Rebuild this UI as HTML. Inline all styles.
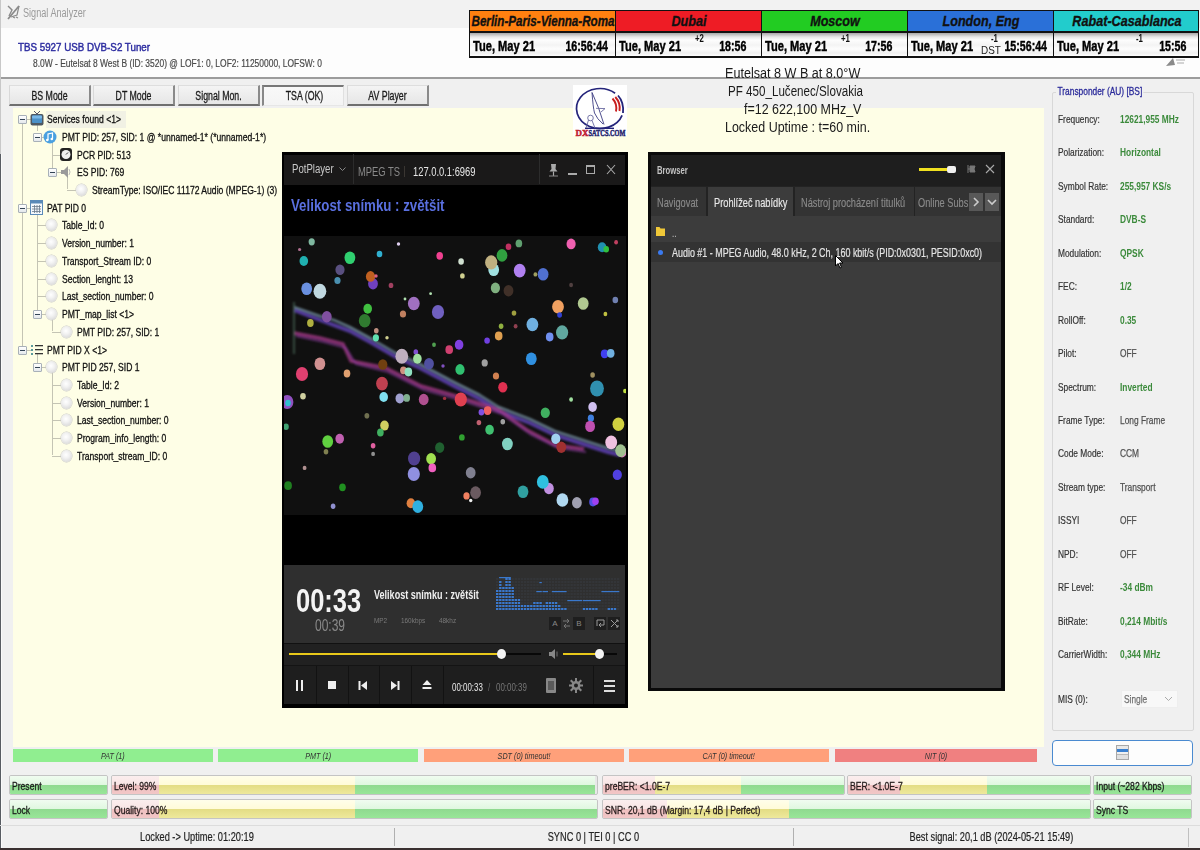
<!DOCTYPE html>
<html><head><meta charset="utf-8">
<style>
*{margin:0;padding:0;box-sizing:border-box}
html,body{width:1200px;height:850px;overflow:hidden}
body{background:#f0f0f0;font-family:"Liberation Sans",sans-serif;position:relative;color:#222}
.a{position:absolute}
.t{position:absolute;white-space:nowrap;transform-origin:0 50%;transform:scaleX(.78);font-size:11px;line-height:14px}
.c{transform-origin:50% 50%}
/* tabs */
.tab{position:absolute;top:85px;height:21px;background:linear-gradient(#f4f4f4,#e6e6e6);border-right:2px solid #8a8a8a;border-bottom:2px solid #6f6f6f;border-left:1px solid #d8d8d8;border-top:1px solid #dedede}
.tab span{position:absolute;left:0;right:0;top:3px;text-align:center;font-size:12px;transform:scaleX(.73);white-space:nowrap;color:#1a1a1a;-webkit-text-stroke:.3px #1a1a1a}
/* tree */
.tr{position:absolute;font-size:11px;line-height:14px;white-space:nowrap;transform-origin:0 50%;transform:scaleX(.78);color:#111;-webkit-text-stroke:.3px #111}
.bul{position:absolute;width:11px;height:12px;border-radius:50%;background:radial-gradient(circle at 45% 40%,#ffffff 0,#f2f2f2 35%,#cfcfcf 100%);box-shadow:0 0 0 .5px #c8c8c8}
.exp{position:absolute;width:9px;height:9px;border:1px solid #a8b0b8;background:linear-gradient(#fff,#e4e8ec);border-radius:1px}
.exp:after{content:"";position:absolute;left:1px;top:3px;width:5px;height:1px;background:#345}
.vl{position:absolute;width:1px;background:#c4c4b4}
.hl{position:absolute;height:1px;background:#c4c4b4}
/* right panel */
.lb{position:absolute;left:1058px;font-size:11px;line-height:14px;white-space:nowrap;transform-origin:0 50%;transform:scaleX(.76);color:#333;-webkit-text-stroke:.2px #333}
.vv{position:absolute;left:1120px;font-size:11px;line-height:14px;white-space:nowrap;transform-origin:0 50%;transform:scaleX(.76);color:#3b8a3b;font-weight:bold}
.vg{color:#505050;font-weight:normal;-webkit-text-stroke:.25px #505050}
/* table bars */
.tb{position:absolute;top:749px;height:12.5px;font-size:9px;line-height:15px;text-align:center;font-style:italic;color:#333}
.tb span{display:inline-block;transform:scaleX(.8)}
/* progress */
.pb{position:absolute;height:20px;border:1px solid #c4c4c4;border-radius:2px;overflow:hidden;background:#e8e8e8}
.seg{position:absolute;top:0;bottom:0}
.g{background:linear-gradient(#f0fcf0 0,#dff7df 50%,#8fd98f 50%,#98e698 100%)}
.r{background:linear-gradient(#fbeeee 0,#f8e4e4 50%,#efc0c0 50%,#f2c6c6 100%)}
.y{background:linear-gradient(#fffeea 0,#fffbd8 50%,#e3dc84 50%,#eee99c 100%)}
.pt{position:absolute;left:2px;top:3px;font-size:11px;line-height:14px;white-space:nowrap;transform-origin:0 50%;transform:scaleX(.78);color:#1a1a1a;-webkit-text-stroke:.3px #1a1a1a}
.sb{position:absolute;top:830px;font-size:12px;line-height:14px;white-space:nowrap;color:#222;text-align:center}
.sb span{display:inline-block;transform:scaleX(.77);-webkit-text-stroke:.2px #222}
</style></head><body>

<!-- title bar -->
<div class="a" style="left:0;top:0;width:1200px;height:28px;background:#f2f2f2"></div>
<div class="a" style="left:0;top:28px;width:1200px;height:49px;background:#fdfdfd"></div>
<div class="a" style="left:0;top:77px;width:1200px;height:2px;background:#9c9c9c"></div>
<div class="a" style="left:0;top:0;width:1px;height:154px;background:#c8c8c8"></div><div class="a" style="left:0;top:154px;width:1px;height:696px;background:#585c62"></div><div class="a" style="left:1px;top:154px;width:1px;height:694px;background:#fafafa"></div>

<div class="t" style="left:23px;top:6px;font-size:12px;color:#9a9a9a;transform:scaleX(.76)">Signal Analyzer</div>
<svg class="a" style="left:7px;top:4px" width="13" height="16" viewBox="0 0 13 16"><g stroke="#8a8a8a" fill="none"><path d="M1 2 L5 6 Q3 10 2 12" stroke-width="1.4"/><path d="M1 15 L12 2" stroke-width="1.8"/><path d="M12 2 L10 11 L4 13" stroke-width="1.2"/><path d="M6 13 L8 14 M9 13 L11 14" stroke-width="1.2"/></g></svg>

<div class="t" style="left:18px;top:39.5px;font-size:11.5px;color:#2c2ca0;transform:scaleX(.85);-webkit-text-stroke:.45px #2c2ca0">TBS 5927 USB DVB-S2 Tuner</div>
<div class="t" style="left:33px;top:56px;color:#484848;transform:scaleX(.767);-webkit-text-stroke:.2px #484848">8.0W - Eutelsat 8 West B (ID: 3520) @ LOF1: 0, LOF2: 11250000, LOFSW: 0</div>

<div class="a" style="left:469px;top:10px;width:730px;height:48px;background:#111"></div>
<div class="a" style="left:470px;top:11px;width:145px;height:20px;background:#ff8010"></div>
<div class="a" style="left:470px;top:33px;width:145px;height:23px;background:linear-gradient(#a8a8a8 0,#e8e8e8 4px,#fdfdfd 7px,#f4f4f4 12px,#fdfdfd 16px,#f0f0f0 20px,#fdfdfd 23px)"></div>
<div class="a" style="left:542.5px;top:12px;height:18px;font:italic bold 15px/18px 'Liberation Sans',sans-serif;color:#111;-webkit-text-stroke:.35px #111;white-space:nowrap;transform:translateX(-50%) scaleX(0.775)">Berlin-Paris-Vienna-Roma</div>
<div class="t" style="left:473px;top:37px;font:bold 15px/17px 'Liberation Sans',sans-serif;color:#000;-webkit-text-stroke:.45px #000;transform:scaleX(.74)">Tue, May 21</div>
<div class="a" style="left:469px;top:37px;width:139px;text-align:right;font:bold 15px/17px 'Liberation Sans',sans-serif;color:#000;-webkit-text-stroke:.45px #000;white-space:nowrap"><span style="display:inline-block;transform:scaleX(.71);transform-origin:100% 50%">16:56:44</span></div>
<div class="a" style="left:616px;top:11px;width:145px;height:20px;background:#ee1c25"></div>
<div class="a" style="left:616px;top:33px;width:145px;height:23px;background:linear-gradient(#a8a8a8 0,#e8e8e8 4px,#fdfdfd 7px,#f4f4f4 12px,#fdfdfd 16px,#f0f0f0 20px,#fdfdfd 23px)"></div>
<div class="a" style="left:688.5px;top:12px;height:18px;font:italic bold 15px/18px 'Liberation Sans',sans-serif;color:#111;-webkit-text-stroke:.35px #111;white-space:nowrap;transform:translateX(-50%) scaleX(0.84)">Dubai</div>
<div class="t" style="left:619px;top:37px;font:bold 15px/17px 'Liberation Sans',sans-serif;color:#000;-webkit-text-stroke:.45px #000;transform:scaleX(.74)">Tue, May 21</div>
<div class="a" style="left:615px;top:37px;width:131px;text-align:right;font:bold 15px/17px 'Liberation Sans',sans-serif;color:#000;-webkit-text-stroke:.45px #000;white-space:nowrap"><span style="display:inline-block;transform:scaleX(.71);transform-origin:100% 50%">18:56</span></div>
<div class="t" style="left:695px;top:33px;font:bold 10px/12px 'Liberation Sans',sans-serif;color:#111">+2</div>
<div class="a" style="left:762px;top:11px;width:145px;height:20px;background:#22cc22"></div>
<div class="a" style="left:762px;top:33px;width:145px;height:23px;background:linear-gradient(#a8a8a8 0,#e8e8e8 4px,#fdfdfd 7px,#f4f4f4 12px,#fdfdfd 16px,#f0f0f0 20px,#fdfdfd 23px)"></div>
<div class="a" style="left:834.5px;top:12px;height:18px;font:italic bold 15px/18px 'Liberation Sans',sans-serif;color:#111;-webkit-text-stroke:.35px #111;white-space:nowrap;transform:translateX(-50%) scaleX(0.84)">Moscow</div>
<div class="t" style="left:765px;top:37px;font:bold 15px/17px 'Liberation Sans',sans-serif;color:#000;-webkit-text-stroke:.45px #000;transform:scaleX(.74)">Tue, May 21</div>
<div class="a" style="left:761px;top:37px;width:131px;text-align:right;font:bold 15px/17px 'Liberation Sans',sans-serif;color:#000;-webkit-text-stroke:.45px #000;white-space:nowrap"><span style="display:inline-block;transform:scaleX(.71);transform-origin:100% 50%">17:56</span></div>
<div class="t" style="left:841px;top:33px;font:bold 10px/12px 'Liberation Sans',sans-serif;color:#111">+1</div>
<div class="a" style="left:908px;top:11px;width:145px;height:20px;background:#2a70d8"></div>
<div class="a" style="left:908px;top:33px;width:145px;height:23px;background:linear-gradient(#a8a8a8 0,#e8e8e8 4px,#fdfdfd 7px,#f4f4f4 12px,#fdfdfd 16px,#f0f0f0 20px,#fdfdfd 23px)"></div>
<div class="a" style="left:980.5px;top:12px;height:18px;font:italic bold 15px/18px 'Liberation Sans',sans-serif;color:#111;-webkit-text-stroke:.35px #111;white-space:nowrap;transform:translateX(-50%) scaleX(0.84)">London, Eng</div>
<div class="t" style="left:911px;top:37px;font:bold 15px/17px 'Liberation Sans',sans-serif;color:#000;-webkit-text-stroke:.45px #000;transform:scaleX(.74)">Tue, May 21</div>
<div class="a" style="left:907px;top:37px;width:140px;text-align:right;font:bold 15px/17px 'Liberation Sans',sans-serif;color:#000;-webkit-text-stroke:.45px #000;white-space:nowrap"><span style="display:inline-block;transform:scaleX(.71);transform-origin:100% 50%">15:56:44</span></div>
<div class="t" style="left:991px;top:33px;font:bold 10px/12px 'Liberation Sans',sans-serif;color:#111">-1</div>
<div class="t" style="left:981px;top:44px;font:11px/12px 'Liberation Sans',sans-serif;color:#222;transform:scaleX(.9)">DST</div>
<div class="a" style="left:1054px;top:11px;width:144px;height:20px;background:#22cccc"></div>
<div class="a" style="left:1054px;top:33px;width:144px;height:23px;background:linear-gradient(#a8a8a8 0,#e8e8e8 4px,#fdfdfd 7px,#f4f4f4 12px,#fdfdfd 16px,#f0f0f0 20px,#fdfdfd 23px)"></div>
<div class="a" style="left:1126.5px;top:12px;height:18px;font:italic bold 15px/18px 'Liberation Sans',sans-serif;color:#111;-webkit-text-stroke:.35px #111;white-space:nowrap;transform:translateX(-50%) scaleX(0.84)">Rabat-Casablanca</div>
<div class="t" style="left:1057px;top:37px;font:bold 15px/17px 'Liberation Sans',sans-serif;color:#000;-webkit-text-stroke:.45px #000;transform:scaleX(.74)">Tue, May 21</div>
<div class="a" style="left:1053px;top:37px;width:133px;text-align:right;font:bold 15px/17px 'Liberation Sans',sans-serif;color:#000;-webkit-text-stroke:.45px #000;white-space:nowrap"><span style="display:inline-block;transform:scaleX(.71);transform-origin:100% 50%">15:56</span></div>
<div class="t" style="left:1136px;top:33px;font:bold 10px/12px 'Liberation Sans',sans-serif;color:#111">-1</div>
<!-- tabs -->
<div class="tab" style="left:9px;width:82px"><span>BS Mode</span></div>
<div class="tab" style="left:93px;width:82px"><span>DT Mode</span></div>
<div class="tab" style="left:178px;width:82px"><span>Signal Mon.</span></div>
<div class="tab" style="left:262px;width:82px;background:linear-gradient(#f8f8f8,#f4f4f4);border-top:2px solid #777;border-left:2px solid #888;border-right:1px solid #e0e0e0;border-bottom:1px solid #e6e6e6"><span style="left:2px;top:2px">TSA (OK)</span></div>
<div class="tab" style="left:347px;width:82px"><span>AV Player</span></div>

<!-- main yellow panel -->
<div class="a" style="left:13px;top:108px;width:1031px;height:638.5px;background:#fefee6"></div>

<div class="vl" style="left:22px;top:124px;height:225px"></div>
<div class="vl" style="left:37px;top:125px;height:6px"></div>
<div class="vl" style="left:52px;top:141px;height:30px"></div>
<div class="vl" style="left:67px;top:176px;height:13px"></div>
<div class="vl" style="left:37px;top:212px;height:101px"></div>
<div class="vl" style="left:52px;top:318px;height:13px"></div>
<div class="vl" style="left:37px;top:354px;height:13px"></div>
<div class="vl" style="left:52px;top:372px;height:83px"></div>
<div class="a" style="left:46px;top:111px;width:80px;height:17px;background:#f1f1e4"></div>
<div class="hl" style="left:22px;top:119.0px;width:9px"></div>
<div class="exp" style="left:18px;top:115.0px"></div>
<svg class="a" style="left:30px;top:110.0px" width="14" height="16" viewBox="0 0 14 16"><path d="M4 1 L7 4 L10 1" stroke="#556" stroke-width="1" fill="none"/><rect x="0.5" y="4" width="13" height="11.5" rx="2" fill="#4e5862"/><rect x="2" y="5.5" width="10" height="7.5" rx="1" fill="#4a90c8"/><rect x="2" y="5.5" width="10" height="3" rx="1" fill="#78b8e8"/></svg>
<div class="tr" style="left:47px;top:112.0px">Services found &lt;1&gt;</div>
<div class="hl" style="left:37px;top:136.7px;width:9px"></div>
<div class="exp" style="left:33px;top:132.7px"></div>
<svg class="a" style="left:43px;top:129.7px" width="14" height="14" viewBox="0 0 14 14"><circle cx="7" cy="7" r="6.5" fill="#4aa0e0"/><path d="M5 10 V4 L9.5 3 V9" stroke="#fff" stroke-width="1.2" fill="none"/><circle cx="4.3" cy="10" r="1.3" fill="#fff"/><circle cx="8.8" cy="9" r="1.3" fill="#fff"/></svg>
<div class="tr" style="left:62px;top:129.7px">PMT PID: 257, SID: 1 @ *unnamed-1* (*unnamed-1*)</div>
<div class="hl" style="left:52px;top:154.5px;width:9px"></div>
<svg class="a" style="left:60px;top:147.5px" width="12" height="13" viewBox="0 0 12 13"><rect x="0" y="0" width="12" height="13" rx="3" fill="#222"/><circle cx="6" cy="6.5" r="4.5" fill="#eee"/><path d="M6 6.5 L8 4.5" stroke="#333" stroke-width="1"/></svg>
<div class="tr" style="left:77px;top:147.5px">PCR PID: 513</div>
<div class="hl" style="left:52px;top:172.2px;width:9px"></div>
<div class="exp" style="left:48px;top:168.2px"></div>
<svg class="a" style="left:60px;top:165.2px" width="12" height="14" viewBox="0 0 12 14"><path d="M1 5 H4 L8 1 V13 L4 9 H1 Z" fill="#9a9a9a"/><path d="M9 4 Q11 7 9 10" stroke="#bbb" fill="none"/></svg>
<div class="tr" style="left:77px;top:165.2px">ES PID: 769</div>
<div class="hl" style="left:67px;top:189.9px;width:9px"></div>
<div class="bul" style="left:76px;top:183.9px"></div>
<div class="tr" style="left:92px;top:182.9px">StreamType: ISO/IEC 11172 Audio (MPEG-1) (3)</div>
<div class="hl" style="left:22px;top:207.7px;width:9px"></div>
<div class="exp" style="left:18px;top:203.7px"></div>
<svg class="a" style="left:30px;top:199.7px" width="13" height="15" viewBox="0 0 13 15"><rect x="0.5" y="0.5" width="12" height="14" fill="#f4f8fc" stroke="#5a8ab8"/><rect x="0.5" y="0.5" width="12" height="3" fill="#5a8ab8"/><g stroke="#6a7a8a" stroke-width=".8"><path d="M2 6.5H11M2 9H11M2 11.5H11M4.5 5V13M7 5V13M9.5 5V13"/></g></svg>
<div class="tr" style="left:47px;top:200.7px">PAT PID 0</div>
<div class="hl" style="left:37px;top:225.4px;width:9px"></div>
<div class="bul" style="left:46px;top:219.4px"></div>
<div class="tr" style="left:62px;top:218.4px">Table_Id: 0</div>
<div class="hl" style="left:37px;top:243.1px;width:9px"></div>
<div class="bul" style="left:46px;top:237.1px"></div>
<div class="tr" style="left:62px;top:236.1px">Version_number: 1</div>
<div class="hl" style="left:37px;top:260.8px;width:9px"></div>
<div class="bul" style="left:46px;top:254.8px"></div>
<div class="tr" style="left:62px;top:253.8px">Transport_Stream ID: 0</div>
<div class="hl" style="left:37px;top:278.6px;width:9px"></div>
<div class="bul" style="left:46px;top:272.6px"></div>
<div class="tr" style="left:62px;top:271.6px">Section_lenght: 13</div>
<div class="hl" style="left:37px;top:296.3px;width:9px"></div>
<div class="bul" style="left:46px;top:290.3px"></div>
<div class="tr" style="left:62px;top:289.3px">Last_section_number: 0</div>
<div class="hl" style="left:37px;top:314.0px;width:9px"></div>
<div class="exp" style="left:33px;top:310.0px"></div>
<div class="bul" style="left:46px;top:308.0px"></div>
<div class="tr" style="left:62px;top:307.0px">PMT_map_list &lt;1&gt;</div>
<div class="hl" style="left:52px;top:331.8px;width:9px"></div>
<div class="bul" style="left:61px;top:325.8px"></div>
<div class="tr" style="left:77px;top:324.8px">PMT PID: 257, SID: 1</div>
<div class="hl" style="left:22px;top:349.5px;width:9px"></div>
<div class="exp" style="left:18px;top:345.5px"></div>
<svg class="a" style="left:31px;top:342.5px" width="12" height="14" viewBox="0 0 12 14"><g fill="#5a9a9a"><rect x="0" y="2" width="2" height="2"/><rect x="0" y="6" width="2" height="2"/><rect x="0" y="10" width="2" height="2"/></g><g fill="#333"><rect x="4" y="2" width="8" height="1.3"/><rect x="4" y="6" width="8" height="1.3"/><rect x="4" y="10" width="8" height="1.3"/></g></svg>
<div class="tr" style="left:47px;top:342.5px">PMT PID X &lt;1&gt;</div>
<div class="hl" style="left:37px;top:367.2px;width:9px"></div>
<div class="exp" style="left:33px;top:363.2px"></div>
<div class="bul" style="left:46px;top:361.2px"></div>
<div class="tr" style="left:62px;top:360.2px">PMT PID 257, SID 1</div>
<div class="hl" style="left:52px;top:384.9px;width:9px"></div>
<div class="bul" style="left:61px;top:378.9px"></div>
<div class="tr" style="left:77px;top:377.9px">Table_Id: 2</div>
<div class="hl" style="left:52px;top:402.7px;width:9px"></div>
<div class="bul" style="left:61px;top:396.7px"></div>
<div class="tr" style="left:77px;top:395.7px">Version_number: 1</div>
<div class="hl" style="left:52px;top:420.4px;width:9px"></div>
<div class="bul" style="left:61px;top:414.4px"></div>
<div class="tr" style="left:77px;top:413.4px">Last_section_number: 0</div>
<div class="hl" style="left:52px;top:438.1px;width:9px"></div>
<div class="bul" style="left:61px;top:432.1px"></div>
<div class="tr" style="left:77px;top:431.1px">Program_info_length: 0</div>
<div class="hl" style="left:52px;top:455.9px;width:9px"></div>
<div class="bul" style="left:61px;top:449.9px"></div>
<div class="tr" style="left:77px;top:448.9px">Transport_stream_ID: 0</div>
<div class="a" style="left:573px;top:85px;width:54px;height:51px;background:#fff"></div>
<svg class="a" style="left:573px;top:85px" width="54" height="52" viewBox="0 0 54 52">
<path d="M49.1 30.3 A23.5 20 0 1 1 42.1 8.2" stroke="#24247a" stroke-width="1.7" fill="none"/>
<path d="M45 10.5 Q51 17 50 28" stroke="#24247a" stroke-width="1.8" fill="none"/>
<path d="M39.5 13.5 Q44.5 19 43 26.5" stroke="#c82020" stroke-width="1.9" fill="none"/>
<path d="M42.3 12 Q47.8 18 46.5 26" stroke="#c82020" stroke-width="1.9" fill="none"/>
<path d="M12 43.3 H41" stroke="#24247a" stroke-width="1.4"/>
<path d="M19 7.5 Q26 22 31 39.5 M19 7.5 Q20 22 21.5 28 Q24 34 30 39" stroke="#3a3a80" stroke-width=".9" fill="none"/>
<path d="M23 23.3 L32 23.6 L28 27" stroke="#6a6aa0" stroke-width=".9" fill="none"/>
<circle cx="17.5" cy="33" r="2.8" stroke="#6a6aa0" stroke-width=".9" fill="none"/>
<path d="M15.5 35 L13 43 M19 35.5 L22 43" stroke="#6a6aa0" stroke-width=".9" fill="none"/>
<text x="2.5" y="50.5" font-family="Liberation Serif" font-weight="bold" font-size="8.5" fill="#c02030" stroke="#c02030" stroke-width=".45" textLength="13" lengthAdjust="spacingAndGlyphs">DX</text>
<text x="15.5" y="50.5" font-family="Liberation Serif" font-weight="bold" font-size="8.5" fill="#22226a" stroke="#22226a" stroke-width=".45" textLength="37" lengthAdjust="spacingAndGlyphs">SATCS.COM</text>
</svg>
<div class="t" style="left:725px;top:65px;font-size:14px;line-height:16px;color:#1a1a1a;transform:scaleX(0.9)">Eutelsat 8 W B at 8.0°W</div>
<div class="t" style="left:728px;top:83px;font-size:14px;line-height:16px;color:#1a1a1a;transform:scaleX(0.83)">PF 450_Lučenec/Slovakia</div>
<div class="t" style="left:744px;top:101px;font-size:14px;line-height:16px;color:#1a1a1a;transform:scaleX(0.89)">f=12 622,100 MHz_V</div>
<div class="t" style="left:725px;top:119px;font-size:14px;line-height:16px;color:#1a1a1a;transform:scaleX(0.89)">Locked Uptime : t=60 min.</div>
<div class="a" style="left:282px;top:152px;width:346px;height:556px;background:#000"></div>
<div class="a" style="left:284px;top:155px;width:341px;height:30px;background:#1a1919"></div>
<div class="a" style="left:353px;top:154px;width:1px;height:30px;background:#2c2c2c"></div>
<div class="a" style="left:539px;top:154px;width:1px;height:30px;background:#2c2c2c"></div>
<div class="t" style="left:292px;top:162.2px;font:normal 12px/15.6px 'Liberation Sans',sans-serif;color:#c8c8c8;transform:scaleX(0.8);">PotPlayer</div>
<svg class="a" style="left:339px;top:167px" width="7" height="5" viewBox="0 0 7 5"><path d="M.5 .5 L3.5 3.5 L6.5 .5" stroke="#888" fill="none"/></svg>
<div class="t" style="left:358px;top:164.7px;font:normal 12px/15.6px 'Liberation Sans',sans-serif;color:#8a8a8a;transform:scaleX(0.78);">MPEG TS</div>
<div class="a" style="left:404px;top:166px;width:1px;height:11px;background:#3a3632"></div>
<div class="t" style="left:413px;top:164.7px;font:normal 12px/15.6px 'Liberation Sans',sans-serif;color:#e6e6e6;transform:scaleX(0.78);">127.0.0.1:6969</div>
<svg class="a" style="left:548px;top:163px" width="11" height="14" viewBox="0 0 11 14"><path d="M3 1 H8 L7.5 6 L9.5 8.5 H1.5 L3.5 6 Z" fill="#aaa"/><path d="M5.5 8.5 V13" stroke="#aaa" stroke-width="1.2"/><path d="M1 13 H10" stroke="#888"/></svg>
<div class="a" style="left:568px;top:173px;width:9px;height:2px;background:#aaa"></div>
<div class="a" style="left:586px;top:165px;width:9px;height:9px;border:1px solid #aaa;border-top-width:2px"></div>
<svg class="a" style="left:606px;top:164px" width="10" height="11" viewBox="0 0 10 11"><path d="M1 1 L9 10 M9 1 L1 10" stroke="#aaa" stroke-width="1.1"/></svg>
<div class="t" style="left:291px;top:195.6px;font:bold 16px/20.8px 'Liberation Sans',sans-serif;color:#5a70e0;transform:scaleX(0.83);">Velikost snímku : zvětšit</div>
<svg class="a" style="left:284px;top:236px" width="342" height="279" viewBox="0 0 342 279"><rect width="342" height="279" fill="#101010"/><defs><filter id="bl" x="-20%" y="-20%" width="140%" height="140%"><feGaussianBlur stdDeviation="0.8"/></filter></defs><g filter="url(#bl)" fill="none" stroke-linejoin="round"><path d="M10 74 L36 84 L66 95 L88 107 L112 121 L136 132 L172 151 L196 163 L215 175 L246 187 L271 199 L296 207 L324 216 L336 219" stroke="#6a48c8" stroke-width="4" opacity=".75"/><path d="M10 71 L36 80 L50 84 L66 91 L88 103 L112 117 L136 128 L172 147 L196 159 L215 171 L246 183 L271 195 L296 203 L324 212 L336 215" stroke="#7a98a8" stroke-width="2" opacity=".85"/><path d="M10 97 L36 102 L59 108 L67 125 L102 132 L137 150 L172 160 L215 174 L243 194 L271 209 L300 213" stroke="#a03a86" stroke-width="3.5" opacity=".8"/><path d="M12 100 L40 106 L62 112 L72 128 L104 136 L140 154 L176 164 L218 178 L246 198 L274 212 L302 216" stroke="#8a3aa0" stroke-width="2" opacity=".6"/><path d="M10 66 L10 118" stroke="#507060" stroke-width="2" opacity=".6"/></g><ellipse cx="27.7" cy="5.8" rx="3.1" ry="3.6" fill="#7fb8a0"/><ellipse cx="15.6" cy="13.5" rx="1.6" ry="1.6" fill="#b07090"/><ellipse cx="19.8" cy="25.0" rx="4.3" ry="5.0" fill="#20b0b0"/><ellipse cx="65.9" cy="21.7" rx="5.4" ry="6.3" fill="#30d070"/><ellipse cx="95.5" cy="18.0" rx="2.8" ry="3.2" fill="#30b0d0"/><ellipse cx="114.5" cy="8.0" rx="1.7" ry="1.7" fill="#e0d0f0"/><ellipse cx="155.7" cy="19.8" rx="3.3" ry="3.9" fill="#f04090"/><ellipse cx="56.0" cy="33.8" rx="4.6" ry="5.3" fill="#5a5080"/><ellipse cx="53.5" cy="44.5" rx="3.1" ry="3.6" fill="#4a90b0"/><ellipse cx="89.0" cy="47.8" rx="4.9" ry="5.7" fill="#7040c0"/><ellipse cx="86.5" cy="40.4" rx="4.6" ry="5.3" fill="#c06020"/><ellipse cx="92.0" cy="40.0" rx="1.7" ry="1.7" fill="#e06080"/><ellipse cx="107.0" cy="49.4" rx="2.3" ry="2.7" fill="#a04060"/><ellipse cx="22.7" cy="52.7" rx="5.4" ry="6.3" fill="#6a90e0"/><ellipse cx="35.9" cy="55.2" rx="6.4" ry="7.5" fill="#c0d8e0"/><ellipse cx="146.6" cy="57.7" rx="1.4" ry="1.4" fill="#b0e0b0"/><ellipse cx="121.0" cy="63.0" rx="1.4" ry="1.4" fill="#b0e0b0"/><ellipse cx="129.8" cy="67.5" rx="5.9" ry="6.8" fill="#a070c0"/><ellipse cx="154.0" cy="76.0" rx="6.1" ry="7.1" fill="#7060c0"/><ellipse cx="119.0" cy="78.0" rx="3.1" ry="3.6" fill="#c08060"/><ellipse cx="83.7" cy="72.8" rx="4.3" ry="5.0" fill="#40c040"/><ellipse cx="80.7" cy="84.8" rx="5.9" ry="6.8" fill="#307a30"/><ellipse cx="42.8" cy="80.7" rx="4.9" ry="5.7" fill="#8050a0"/><ellipse cx="26.4" cy="87.0" rx="3.3" ry="3.9" fill="#b0b040"/><ellipse cx="92.3" cy="94.7" rx="2.3" ry="2.7" fill="#c09080"/><ellipse cx="91.9" cy="101.8" rx="3.1" ry="3.6" fill="#60e0b0"/><ellipse cx="103.0" cy="101.8" rx="1.7" ry="1.7" fill="#d0d090"/><ellipse cx="150.0" cy="108.7" rx="1.9" ry="2.2" fill="#50a050"/><ellipse cx="165.2" cy="113.7" rx="3.8" ry="4.4" fill="#d04070"/><ellipse cx="131.8" cy="116.0" rx="2.3" ry="2.7" fill="#8050d0"/><ellipse cx="98.8" cy="128.5" rx="4.6" ry="5.3" fill="#704010"/><ellipse cx="117.8" cy="120.3" rx="6.4" ry="7.5" fill="#c0b0c0"/><ellipse cx="133.4" cy="122.7" rx="4.3" ry="5.0" fill="#a0e0a0"/><ellipse cx="145.0" cy="127.7" rx="4.9" ry="5.7" fill="#5050a0"/><ellipse cx="35.9" cy="127.7" rx="5.4" ry="6.3" fill="#d09090"/><ellipse cx="18.0" cy="138.0" rx="6.1" ry="7.1" fill="#e04070"/><ellipse cx="63.0" cy="137.5" rx="3.3" ry="3.9" fill="#e0a070"/><ellipse cx="119.4" cy="134.3" rx="3.3" ry="3.9" fill="#d09080"/><ellipse cx="124.4" cy="136.0" rx="3.8" ry="4.4" fill="#90e0c0"/><ellipse cx="159.0" cy="130.0" rx="1.7" ry="1.7" fill="#8050c0"/><ellipse cx="287.1" cy="7.9" rx="4.6" ry="5.3" fill="#f060b0"/><ellipse cx="234.9" cy="7.4" rx="3.3" ry="3.9" fill="#60a070"/><ellipse cx="224.5" cy="10.7" rx="2.8" ry="3.2" fill="#c03060"/><ellipse cx="218.0" cy="19.4" rx="5.4" ry="6.3" fill="#30a040"/><ellipse cx="209.7" cy="33.8" rx="5.4" ry="6.3" fill="#a0e0e0"/><ellipse cx="207.2" cy="26.4" rx="6.1" ry="7.1" fill="#c0b080"/><ellipse cx="177.1" cy="25.5" rx="2.8" ry="3.2" fill="#d0e0d0"/><ellipse cx="178.4" cy="39.9" rx="2.3" ry="2.7" fill="#d0d090"/><ellipse cx="235.7" cy="34.6" rx="5.9" ry="6.8" fill="#b080f0"/><ellipse cx="259.1" cy="38.2" rx="5.4" ry="6.3" fill="#5070d0"/><ellipse cx="251.4" cy="38.4" rx="1.9" ry="2.2" fill="#a0a060"/><ellipse cx="211.4" cy="51.9" rx="4.6" ry="5.3" fill="#80b080"/><ellipse cx="224.5" cy="54.7" rx="4.9" ry="5.7" fill="#403028"/><ellipse cx="287.1" cy="49.0" rx="1.9" ry="2.2" fill="#504040"/><ellipse cx="318.1" cy="11.2" rx="4.3" ry="5.0" fill="#2090b0"/><ellipse cx="322.2" cy="13.2" rx="2.8" ry="3.2" fill="#30c040"/><ellipse cx="332.1" cy="6.3" rx="1.9" ry="2.2" fill="#c04060"/><ellipse cx="274.0" cy="70.8" rx="5.9" ry="6.8" fill="#f0a060"/><ellipse cx="275.6" cy="79.0" rx="2.4" ry="2.8" fill="#3040d0"/><ellipse cx="299.2" cy="67.5" rx="5.4" ry="6.3" fill="#b0c890"/><ellipse cx="331.3" cy="64.0" rx="2.8" ry="3.2" fill="#7080b0"/><ellipse cx="321.4" cy="78.0" rx="1.9" ry="2.2" fill="#c0c040"/><ellipse cx="230.0" cy="77.1" rx="2.3" ry="2.7" fill="#a0a040"/><ellipse cx="248.4" cy="88.5" rx="5.9" ry="6.8" fill="#70b0e0"/><ellipse cx="278.1" cy="96.4" rx="6.1" ry="7.1" fill="#60a8a0"/><ellipse cx="265.7" cy="101.0" rx="3.8" ry="4.4" fill="#7090f0"/><ellipse cx="217.1" cy="90.3" rx="2.3" ry="2.7" fill="#90b040"/><ellipse cx="231.6" cy="90.3" rx="1.9" ry="2.2" fill="#904050"/><ellipse cx="214.7" cy="100.0" rx="3.8" ry="4.4" fill="#e0a050"/><ellipse cx="203.1" cy="104.6" rx="2.8" ry="3.2" fill="#7040e0"/><ellipse cx="175.1" cy="108.7" rx="4.3" ry="5.0" fill="#8040e0"/><ellipse cx="247.3" cy="122.7" rx="5.4" ry="6.3" fill="#3090e0"/><ellipse cx="200.7" cy="126.9" rx="3.1" ry="3.6" fill="#a0a0a0"/><ellipse cx="176.0" cy="133.4" rx="4.6" ry="5.3" fill="#30c070"/><ellipse cx="212.0" cy="140.0" rx="3.1" ry="3.6" fill="#d08050"/><ellipse cx="320.6" cy="117.8" rx="3.8" ry="4.4" fill="#4040f0"/><ellipse cx="326.7" cy="117.3" rx="3.8" ry="4.4" fill="#70b0e0"/><ellipse cx="308.6" cy="139.0" rx="2.3" ry="2.7" fill="#a09060"/><ellipse cx="98.0" cy="147.6" rx="5.9" ry="6.8" fill="#c04050"/><ellipse cx="99.7" cy="161.0" rx="4.3" ry="5.0" fill="#80e0f0"/><ellipse cx="115.8" cy="162.4" rx="4.3" ry="5.0" fill="#a0a0d0"/><ellipse cx="122.7" cy="161.9" rx="3.3" ry="3.9" fill="#80b090"/><ellipse cx="139.7" cy="163.5" rx="4.9" ry="5.7" fill="#b05090"/><ellipse cx="3.3" cy="166.0" rx="6.1" ry="7.1" fill="#9050c0"/><ellipse cx="4.0" cy="167.0" rx="2.8" ry="3.2" fill="#30c0d0"/><ellipse cx="19.0" cy="160.2" rx="2.8" ry="3.2" fill="#d0d0a0"/><ellipse cx="160.6" cy="162.4" rx="1.7" ry="1.7" fill="#a03040"/><ellipse cx="82.9" cy="179.7" rx="2.4" ry="2.8" fill="#707050"/><ellipse cx="100.5" cy="189.6" rx="4.3" ry="5.0" fill="#d0d060"/><ellipse cx="96.4" cy="196.5" rx="3.3" ry="3.9" fill="#40b060"/><ellipse cx="43.7" cy="205.5" rx="5.4" ry="6.3" fill="#60d040"/><ellipse cx="55.7" cy="202.7" rx="4.3" ry="5.0" fill="#c060b0"/><ellipse cx="42.0" cy="215.8" rx="2.3" ry="2.7" fill="#808050"/><ellipse cx="89.1" cy="209.7" rx="2.3" ry="2.7" fill="#e060a0"/><ellipse cx="89.1" cy="217.9" rx="1.9" ry="2.2" fill="#909090"/><ellipse cx="130.1" cy="222.5" rx="6.1" ry="7.1" fill="#504090"/><ellipse cx="129.8" cy="238.0" rx="6.1" ry="7.1" fill="#9090e0"/><ellipse cx="147.1" cy="222.8" rx="4.9" ry="5.7" fill="#a0e050"/><ellipse cx="148.3" cy="231.9" rx="3.8" ry="4.4" fill="#f060c0"/><ellipse cx="155.7" cy="211.6" rx="4.6" ry="5.3" fill="#206030"/><ellipse cx="20.6" cy="231.9" rx="1.9" ry="2.2" fill="#b09090"/><ellipse cx="4.1" cy="249.7" rx="3.8" ry="4.4" fill="#208020"/><ellipse cx="58.5" cy="251.3" rx="3.3" ry="3.9" fill="#209020"/><ellipse cx="49.1" cy="270.3" rx="2.3" ry="2.7" fill="#9090d0"/><ellipse cx="126.9" cy="267.3" rx="4.3" ry="5.0" fill="#e08040"/><ellipse cx="133.8" cy="270.6" rx="5.4" ry="6.3" fill="#30b0e0"/><ellipse cx="2.0" cy="190.7" rx="2.8" ry="3.2" fill="#40a070"/><ellipse cx="218.8" cy="151.2" rx="4.6" ry="5.3" fill="#e03050"/><ellipse cx="176.8" cy="163.5" rx="6.1" ry="7.1" fill="#e04050"/><ellipse cx="203.6" cy="174.6" rx="3.8" ry="4.4" fill="#f06060"/><ellipse cx="197.4" cy="176.2" rx="2.8" ry="3.2" fill="#8050e0"/><ellipse cx="194.9" cy="186.6" rx="2.3" ry="2.7" fill="#c06070"/><ellipse cx="218.8" cy="185.8" rx="2.3" ry="2.7" fill="#a0a0a0"/><ellipse cx="205.6" cy="193.7" rx="4.3" ry="5.0" fill="#40c070"/><ellipse cx="177.9" cy="201.4" rx="2.8" ry="3.2" fill="#30a030"/><ellipse cx="261.3" cy="176.7" rx="4.6" ry="5.3" fill="#40b060"/><ellipse cx="287.1" cy="163.5" rx="1.9" ry="2.2" fill="#a0e0a0"/><ellipse cx="223.4" cy="208.0" rx="5.4" ry="6.3" fill="#80d0c0"/><ellipse cx="271.8" cy="202.7" rx="4.6" ry="5.3" fill="#a0d0f0"/><ellipse cx="277.3" cy="211.3" rx="4.9" ry="5.7" fill="#a03030"/><ellipse cx="313.0" cy="152.5" rx="6.9" ry="8.0" fill="#3090b0"/><ellipse cx="308.6" cy="171.0" rx="4.3" ry="5.0" fill="#d0c0f0"/><ellipse cx="306.9" cy="182.2" rx="3.1" ry="3.6" fill="#4080e0"/><ellipse cx="306.1" cy="190.4" rx="4.9" ry="5.7" fill="#c050b0"/><ellipse cx="334.4" cy="188.2" rx="5.9" ry="6.8" fill="#d0d040"/><ellipse cx="327.2" cy="206.4" rx="5.9" ry="6.8" fill="#f0c0e0"/><ellipse cx="338.0" cy="216.0" rx="4.6" ry="5.4" fill="#e080c0"/><ellipse cx="336.6" cy="214.6" rx="5.4" ry="6.3" fill="#a0c090"/><ellipse cx="186.7" cy="236.8" rx="4.9" ry="5.7" fill="#808090"/><ellipse cx="191.6" cy="256.6" rx="5.4" ry="6.3" fill="#6a5a60"/><ellipse cx="182.5" cy="259.9" rx="3.1" ry="3.6" fill="#f08060"/><ellipse cx="186.7" cy="264.5" rx="1.7" ry="1.7" fill="#f0f0f0"/><ellipse cx="239.0" cy="255.8" rx="5.4" ry="6.3" fill="#30a0a0"/><ellipse cx="264.9" cy="252.5" rx="4.9" ry="5.7" fill="#c090e0"/><ellipse cx="258.8" cy="245.9" rx="5.9" ry="6.8" fill="#30c0e0"/><ellipse cx="278.4" cy="264.0" rx="5.9" ry="6.8" fill="#b0d8f0"/><ellipse cx="292.9" cy="266.8" rx="4.9" ry="5.7" fill="#a0a0b0"/><ellipse cx="309.0" cy="266.0" rx="3.8" ry="4.4" fill="#5050e0"/><ellipse cx="311.5" cy="265.2" rx="3.3" ry="3.8" fill="#a040f0"/><ellipse cx="333.3" cy="238.8" rx="4.6" ry="5.3" fill="#5040e0"/><ellipse cx="341.0" cy="155.0" rx="1.9" ry="2.2" fill="#c0e040"/></svg>
<div class="a" style="left:284px;top:565px;width:341px;height:78px;background:#2f2f2f"></div>
<div class="t" style="left:296px;top:582px;font:bold 34px/36px 'Liberation Sans',sans-serif;color:#f4f4f4;transform:scaleX(.75)">00:33</div>
<div class="t" style="left:315px;top:617px;font:16px/18px 'Liberation Sans',sans-serif;color:#8a8a8a;transform:scaleX(.75)">00:39</div>
<div class="t" style="left:374px;top:588.2px;font:bold 12px/15.6px 'Liberation Sans',sans-serif;color:#f0f0f0;transform:scaleX(0.755);">Velikost snímku : zvětšit</div>
<div class="t" style="left:374px;top:615.8px;font:normal 8px/10.4px 'Liberation Sans',sans-serif;color:#7a7a7a;transform:scaleX(0.8);">MP2</div>
<div class="t" style="left:401px;top:615.8px;font:normal 8px/10.4px 'Liberation Sans',sans-serif;color:#7a7a7a;transform:scaleX(0.8);">160kbps</div>
<div class="t" style="left:439px;top:615.8px;font:normal 8px/10.4px 'Liberation Sans',sans-serif;color:#7a7a7a;transform:scaleX(0.8);">48khz</div>
<svg class="a" style="left:496px;top:577px" width="126" height="34" viewBox="0 0 126 34"><rect x="0.0" y="31" width="2.4" height="2" fill="#3a78cc"/><rect x="0.0" y="28" width="2.4" height="2" fill="#3a78cc"/><rect x="0.0" y="25" width="2.4" height="2" fill="#3a78cc"/><rect x="0.0" y="22" width="2.4" height="2" fill="#3a78cc"/><rect x="0.0" y="19" width="2.4" height="2" fill="#3a78cc"/><rect x="0.0" y="16" width="2.4" height="2" fill="#3a78cc"/><rect x="0.0" y="13" width="2.4" height="2" fill="#3a78cc"/><rect x="0.0" y="10" width="2.4" height="2" fill="#333538"/><rect x="0.0" y="7" width="2.4" height="2" fill="#333538"/><rect x="0.0" y="4" width="2.4" height="2" fill="#333538"/><rect x="0.0" y="1" width="2.4" height="2" fill="#333538"/><rect x="3.1" y="31" width="2.4" height="2" fill="#3a78cc"/><rect x="3.1" y="28" width="2.4" height="2" fill="#3a78cc"/><rect x="3.1" y="25" width="2.4" height="2" fill="#3a78cc"/><rect x="3.1" y="22" width="2.4" height="2" fill="#3a78cc"/><rect x="3.1" y="19" width="2.4" height="2" fill="#3a78cc"/><rect x="3.1" y="16" width="2.4" height="2" fill="#3a78cc"/><rect x="3.1" y="13" width="2.4" height="2" fill="#3a78cc"/><rect x="3.1" y="10" width="2.4" height="2" fill="#3a78cc"/><rect x="3.1" y="7" width="2.4" height="2" fill="#3a78cc"/><rect x="3.1" y="4" width="2.4" height="2" fill="#3a78cc"/><rect x="3.1" y="1" width="2.4" height="2" fill="#333538"/><rect x="6.2" y="31" width="2.4" height="2" fill="#3a78cc"/><rect x="6.2" y="28" width="2.4" height="2" fill="#3a78cc"/><rect x="6.2" y="25" width="2.4" height="2" fill="#3a78cc"/><rect x="6.2" y="22" width="2.4" height="2" fill="#3a78cc"/><rect x="6.2" y="19" width="2.4" height="2" fill="#3a78cc"/><rect x="6.2" y="16" width="2.4" height="2" fill="#3a78cc"/><rect x="6.2" y="13" width="2.4" height="2" fill="#3a78cc"/><rect x="6.2" y="10" width="2.4" height="2" fill="#3a78cc"/><rect x="6.2" y="7" width="2.4" height="2" fill="#333538"/><rect x="6.2" y="4" width="2.4" height="2" fill="#333538"/><rect x="6.2" y="1" width="2.4" height="2" fill="#333538"/><rect x="9.3" y="31" width="2.4" height="2" fill="#3a78cc"/><rect x="9.3" y="28" width="2.4" height="2" fill="#3a78cc"/><rect x="9.3" y="25" width="2.4" height="2" fill="#3a78cc"/><rect x="9.3" y="22" width="2.4" height="2" fill="#3a78cc"/><rect x="9.3" y="19" width="2.4" height="2" fill="#3a78cc"/><rect x="9.3" y="16" width="2.4" height="2" fill="#3a78cc"/><rect x="9.3" y="13" width="2.4" height="2" fill="#3a78cc"/><rect x="9.3" y="10" width="2.4" height="2" fill="#3a78cc"/><rect x="9.3" y="7" width="2.4" height="2" fill="#3a78cc"/><rect x="9.3" y="4" width="2.4" height="2" fill="#3a78cc"/><rect x="9.3" y="1" width="2.4" height="2" fill="#3a78cc"/><rect x="12.4" y="31" width="2.4" height="2" fill="#3a78cc"/><rect x="12.4" y="28" width="2.4" height="2" fill="#3a78cc"/><rect x="12.4" y="25" width="2.4" height="2" fill="#3a78cc"/><rect x="12.4" y="22" width="2.4" height="2" fill="#3a78cc"/><rect x="12.4" y="19" width="2.4" height="2" fill="#3a78cc"/><rect x="12.4" y="16" width="2.4" height="2" fill="#3a78cc"/><rect x="12.4" y="13" width="2.4" height="2" fill="#3a78cc"/><rect x="12.4" y="10" width="2.4" height="2" fill="#3a78cc"/><rect x="12.4" y="7" width="2.4" height="2" fill="#3a78cc"/><rect x="12.4" y="4" width="2.4" height="2" fill="#3a78cc"/><rect x="12.4" y="1" width="2.4" height="2" fill="#3a78cc"/><rect x="15.5" y="31" width="2.4" height="2" fill="#3a78cc"/><rect x="15.5" y="28" width="2.4" height="2" fill="#3a78cc"/><rect x="15.5" y="25" width="2.4" height="2" fill="#3a78cc"/><rect x="15.5" y="22" width="2.4" height="2" fill="#3a78cc"/><rect x="15.5" y="19" width="2.4" height="2" fill="#3a78cc"/><rect x="15.5" y="16" width="2.4" height="2" fill="#3a78cc"/><rect x="15.5" y="13" width="2.4" height="2" fill="#3a78cc"/><rect x="15.5" y="10" width="2.4" height="2" fill="#3a78cc"/><rect x="15.5" y="7" width="2.4" height="2" fill="#333538"/><rect x="15.5" y="4" width="2.4" height="2" fill="#333538"/><rect x="15.5" y="1" width="2.4" height="2" fill="#333538"/><rect x="18.6" y="31" width="2.4" height="2" fill="#3a78cc"/><rect x="18.6" y="28" width="2.4" height="2" fill="#3a78cc"/><rect x="18.6" y="25" width="2.4" height="2" fill="#3a78cc"/><rect x="18.6" y="22" width="2.4" height="2" fill="#3a78cc"/><rect x="18.6" y="19" width="2.4" height="2" fill="#333538"/><rect x="18.6" y="16" width="2.4" height="2" fill="#333538"/><rect x="18.6" y="13" width="2.4" height="2" fill="#333538"/><rect x="18.6" y="10" width="2.4" height="2" fill="#333538"/><rect x="18.6" y="7" width="2.4" height="2" fill="#333538"/><rect x="18.6" y="4" width="2.4" height="2" fill="#333538"/><rect x="18.6" y="1" width="2.4" height="2" fill="#333538"/><rect x="21.7" y="31" width="2.4" height="2" fill="#3a78cc"/><rect x="21.7" y="28" width="2.4" height="2" fill="#3a78cc"/><rect x="21.7" y="25" width="2.4" height="2" fill="#3a78cc"/><rect x="21.7" y="22" width="2.4" height="2" fill="#3a78cc"/><rect x="21.7" y="19" width="2.4" height="2" fill="#333538"/><rect x="21.7" y="16" width="2.4" height="2" fill="#333538"/><rect x="21.7" y="13" width="2.4" height="2" fill="#333538"/><rect x="21.7" y="10" width="2.4" height="2" fill="#333538"/><rect x="21.7" y="7" width="2.4" height="2" fill="#333538"/><rect x="21.7" y="4" width="2.4" height="2" fill="#333538"/><rect x="21.7" y="1" width="2.4" height="2" fill="#333538"/><rect x="24.8" y="31" width="2.4" height="2" fill="#3a78cc"/><rect x="24.8" y="28" width="2.4" height="2" fill="#3a78cc"/><rect x="24.8" y="25" width="2.4" height="2" fill="#333538"/><rect x="24.8" y="22" width="2.4" height="2" fill="#333538"/><rect x="24.8" y="19" width="2.4" height="2" fill="#333538"/><rect x="24.8" y="16" width="2.4" height="2" fill="#333538"/><rect x="24.8" y="13" width="2.4" height="2" fill="#333538"/><rect x="24.8" y="10" width="2.4" height="2" fill="#333538"/><rect x="24.8" y="7" width="2.4" height="2" fill="#333538"/><rect x="24.8" y="4" width="2.4" height="2" fill="#333538"/><rect x="24.8" y="1" width="2.4" height="2" fill="#333538"/><rect x="27.9" y="31" width="2.4" height="2" fill="#3a78cc"/><rect x="27.9" y="28" width="2.4" height="2" fill="#3a78cc"/><rect x="27.9" y="25" width="2.4" height="2" fill="#333538"/><rect x="27.9" y="22" width="2.4" height="2" fill="#333538"/><rect x="27.9" y="19" width="2.4" height="2" fill="#333538"/><rect x="27.9" y="16" width="2.4" height="2" fill="#333538"/><rect x="27.9" y="13" width="2.4" height="2" fill="#333538"/><rect x="27.9" y="10" width="2.4" height="2" fill="#333538"/><rect x="27.9" y="7" width="2.4" height="2" fill="#333538"/><rect x="27.9" y="4" width="2.4" height="2" fill="#333538"/><rect x="27.9" y="1" width="2.4" height="2" fill="#333538"/><rect x="31.0" y="31" width="2.4" height="2" fill="#3a78cc"/><rect x="31.0" y="28" width="2.4" height="2" fill="#3a78cc"/><rect x="31.0" y="25" width="2.4" height="2" fill="#333538"/><rect x="31.0" y="22" width="2.4" height="2" fill="#333538"/><rect x="31.0" y="19" width="2.4" height="2" fill="#333538"/><rect x="31.0" y="16" width="2.4" height="2" fill="#333538"/><rect x="31.0" y="13" width="2.4" height="2" fill="#333538"/><rect x="31.0" y="10" width="2.4" height="2" fill="#333538"/><rect x="31.0" y="7" width="2.4" height="2" fill="#333538"/><rect x="31.0" y="4" width="2.4" height="2" fill="#333538"/><rect x="31.0" y="1" width="2.4" height="2" fill="#333538"/><rect x="34.1" y="31" width="2.4" height="2" fill="#3a78cc"/><rect x="34.1" y="28" width="2.4" height="2" fill="#3a78cc"/><rect x="34.1" y="25" width="2.4" height="2" fill="#333538"/><rect x="34.1" y="22" width="2.4" height="2" fill="#333538"/><rect x="34.1" y="19" width="2.4" height="2" fill="#333538"/><rect x="34.1" y="16" width="2.4" height="2" fill="#333538"/><rect x="34.1" y="13" width="2.4" height="2" fill="#333538"/><rect x="34.1" y="10" width="2.4" height="2" fill="#333538"/><rect x="34.1" y="7" width="2.4" height="2" fill="#333538"/><rect x="34.1" y="4" width="2.4" height="2" fill="#333538"/><rect x="34.1" y="1" width="2.4" height="2" fill="#333538"/><rect x="37.2" y="31" width="2.4" height="2" fill="#3a78cc"/><rect x="37.2" y="28" width="2.4" height="2" fill="#3a78cc"/><rect x="37.2" y="25" width="2.4" height="2" fill="#3a78cc"/><rect x="37.2" y="22" width="2.4" height="2" fill="#333538"/><rect x="37.2" y="19" width="2.4" height="2" fill="#333538"/><rect x="37.2" y="16" width="2.4" height="2" fill="#333538"/><rect x="37.2" y="13" width="2.4" height="2" fill="#333538"/><rect x="37.2" y="10" width="2.4" height="2" fill="#333538"/><rect x="37.2" y="7" width="2.4" height="2" fill="#333538"/><rect x="37.2" y="4" width="2.4" height="2" fill="#333538"/><rect x="37.2" y="1" width="2.4" height="2" fill="#333538"/><rect x="40.3" y="31" width="2.4" height="2" fill="#3a78cc"/><rect x="40.3" y="28" width="2.4" height="2" fill="#3a78cc"/><rect x="40.3" y="25" width="2.4" height="2" fill="#3a78cc"/><rect x="40.3" y="22" width="2.4" height="2" fill="#333538"/><rect x="40.3" y="19" width="2.4" height="2" fill="#333538"/><rect x="40.3" y="16" width="2.4" height="2" fill="#333538"/><rect x="40.3" y="13" width="2.4" height="2" fill="#333538"/><rect x="40.3" y="10" width="2.4" height="2" fill="#333538"/><rect x="40.3" y="7" width="2.4" height="2" fill="#333538"/><rect x="40.3" y="4" width="2.4" height="2" fill="#333538"/><rect x="40.3" y="1" width="2.4" height="2" fill="#333538"/><rect x="43.4" y="31" width="2.4" height="2" fill="#3a78cc"/><rect x="43.4" y="28" width="2.4" height="2" fill="#3a78cc"/><rect x="43.4" y="25" width="2.4" height="2" fill="#3a78cc"/><rect x="43.4" y="22" width="2.4" height="2" fill="#333538"/><rect x="43.4" y="19" width="2.4" height="2" fill="#333538"/><rect x="43.4" y="16" width="2.4" height="2" fill="#333538"/><rect x="43.4" y="13" width="2.4" height="2" fill="#333538"/><rect x="43.4" y="10" width="2.4" height="2" fill="#333538"/><rect x="43.4" y="7" width="2.4" height="2" fill="#333538"/><rect x="43.4" y="4" width="2.4" height="2" fill="#333538"/><rect x="43.4" y="1" width="2.4" height="2" fill="#333538"/><rect x="46.5" y="31" width="2.4" height="2" fill="#3a78cc"/><rect x="46.5" y="28" width="2.4" height="2" fill="#3a78cc"/><rect x="46.5" y="25" width="2.4" height="2" fill="#333538"/><rect x="46.5" y="22" width="2.4" height="2" fill="#333538"/><rect x="46.5" y="19" width="2.4" height="2" fill="#333538"/><rect x="46.5" y="16" width="2.4" height="2" fill="#333538"/><rect x="46.5" y="13" width="2.4" height="2" fill="#333538"/><rect x="46.5" y="10" width="2.4" height="2" fill="#333538"/><rect x="46.5" y="7" width="2.4" height="2" fill="#333538"/><rect x="46.5" y="4" width="2.4" height="2" fill="#333538"/><rect x="46.5" y="1" width="2.4" height="2" fill="#333538"/><rect x="49.6" y="31" width="2.4" height="2" fill="#3a78cc"/><rect x="49.6" y="28" width="2.4" height="2" fill="#3a78cc"/><rect x="49.6" y="25" width="2.4" height="2" fill="#3a78cc"/><rect x="49.6" y="22" width="2.4" height="2" fill="#333538"/><rect x="49.6" y="19" width="2.4" height="2" fill="#333538"/><rect x="49.6" y="16" width="2.4" height="2" fill="#333538"/><rect x="49.6" y="13" width="2.4" height="2" fill="#333538"/><rect x="49.6" y="10" width="2.4" height="2" fill="#333538"/><rect x="49.6" y="7" width="2.4" height="2" fill="#333538"/><rect x="49.6" y="4" width="2.4" height="2" fill="#333538"/><rect x="49.6" y="1" width="2.4" height="2" fill="#333538"/><rect x="52.7" y="31" width="2.4" height="2" fill="#3a78cc"/><rect x="52.7" y="28" width="2.4" height="2" fill="#3a78cc"/><rect x="52.7" y="25" width="2.4" height="2" fill="#3a78cc"/><rect x="52.7" y="22" width="2.4" height="2" fill="#333538"/><rect x="52.7" y="19" width="2.4" height="2" fill="#333538"/><rect x="52.7" y="16" width="2.4" height="2" fill="#333538"/><rect x="52.7" y="13" width="2.4" height="2" fill="#333538"/><rect x="52.7" y="10" width="2.4" height="2" fill="#333538"/><rect x="52.7" y="7" width="2.4" height="2" fill="#333538"/><rect x="52.7" y="4" width="2.4" height="2" fill="#333538"/><rect x="52.7" y="1" width="2.4" height="2" fill="#333538"/><rect x="55.8" y="31" width="2.4" height="2" fill="#3a78cc"/><rect x="55.8" y="28" width="2.4" height="2" fill="#3a78cc"/><rect x="55.8" y="25" width="2.4" height="2" fill="#3a78cc"/><rect x="55.8" y="22" width="2.4" height="2" fill="#333538"/><rect x="55.8" y="19" width="2.4" height="2" fill="#333538"/><rect x="55.8" y="16" width="2.4" height="2" fill="#333538"/><rect x="55.8" y="13" width="2.4" height="2" fill="#333538"/><rect x="55.8" y="10" width="2.4" height="2" fill="#333538"/><rect x="55.8" y="7" width="2.4" height="2" fill="#333538"/><rect x="55.8" y="4" width="2.4" height="2" fill="#333538"/><rect x="55.8" y="1" width="2.4" height="2" fill="#333538"/><rect x="58.9" y="31" width="2.4" height="2" fill="#3a78cc"/><rect x="58.9" y="28" width="2.4" height="2" fill="#3a78cc"/><rect x="58.9" y="25" width="2.4" height="2" fill="#3a78cc"/><rect x="58.9" y="22" width="2.4" height="2" fill="#333538"/><rect x="58.9" y="19" width="2.4" height="2" fill="#333538"/><rect x="58.9" y="16" width="2.4" height="2" fill="#333538"/><rect x="58.9" y="13" width="2.4" height="2" fill="#333538"/><rect x="58.9" y="10" width="2.4" height="2" fill="#333538"/><rect x="58.9" y="7" width="2.4" height="2" fill="#333538"/><rect x="58.9" y="4" width="2.4" height="2" fill="#333538"/><rect x="58.9" y="1" width="2.4" height="2" fill="#333538"/><rect x="62.0" y="31" width="2.4" height="2" fill="#3a78cc"/><rect x="62.0" y="28" width="2.4" height="2" fill="#3a78cc"/><rect x="62.0" y="25" width="2.4" height="2" fill="#333538"/><rect x="62.0" y="22" width="2.4" height="2" fill="#333538"/><rect x="62.0" y="19" width="2.4" height="2" fill="#333538"/><rect x="62.0" y="16" width="2.4" height="2" fill="#333538"/><rect x="62.0" y="13" width="2.4" height="2" fill="#333538"/><rect x="62.0" y="10" width="2.4" height="2" fill="#333538"/><rect x="62.0" y="7" width="2.4" height="2" fill="#333538"/><rect x="62.0" y="4" width="2.4" height="2" fill="#333538"/><rect x="62.0" y="1" width="2.4" height="2" fill="#333538"/><rect x="65.1" y="31" width="2.4" height="2" fill="#3a78cc"/><rect x="65.1" y="28" width="2.4" height="2" fill="#333538"/><rect x="65.1" y="25" width="2.4" height="2" fill="#333538"/><rect x="65.1" y="22" width="2.4" height="2" fill="#333538"/><rect x="65.1" y="19" width="2.4" height="2" fill="#333538"/><rect x="65.1" y="16" width="2.4" height="2" fill="#333538"/><rect x="65.1" y="13" width="2.4" height="2" fill="#333538"/><rect x="65.1" y="10" width="2.4" height="2" fill="#333538"/><rect x="65.1" y="7" width="2.4" height="2" fill="#333538"/><rect x="65.1" y="4" width="2.4" height="2" fill="#333538"/><rect x="65.1" y="1" width="2.4" height="2" fill="#333538"/><rect x="68.2" y="31" width="2.4" height="2" fill="#3a78cc"/><rect x="68.2" y="28" width="2.4" height="2" fill="#333538"/><rect x="68.2" y="25" width="2.4" height="2" fill="#333538"/><rect x="68.2" y="22" width="2.4" height="2" fill="#333538"/><rect x="68.2" y="19" width="2.4" height="2" fill="#333538"/><rect x="68.2" y="16" width="2.4" height="2" fill="#333538"/><rect x="68.2" y="13" width="2.4" height="2" fill="#333538"/><rect x="68.2" y="10" width="2.4" height="2" fill="#333538"/><rect x="68.2" y="7" width="2.4" height="2" fill="#333538"/><rect x="68.2" y="4" width="2.4" height="2" fill="#333538"/><rect x="68.2" y="1" width="2.4" height="2" fill="#333538"/><rect x="71.3" y="31" width="2.4" height="2" fill="#333538"/><rect x="71.3" y="28" width="2.4" height="2" fill="#333538"/><rect x="71.3" y="25" width="2.4" height="2" fill="#333538"/><rect x="71.3" y="22" width="2.4" height="2" fill="#333538"/><rect x="71.3" y="19" width="2.4" height="2" fill="#333538"/><rect x="71.3" y="16" width="2.4" height="2" fill="#333538"/><rect x="71.3" y="13" width="2.4" height="2" fill="#333538"/><rect x="71.3" y="10" width="2.4" height="2" fill="#333538"/><rect x="71.3" y="7" width="2.4" height="2" fill="#333538"/><rect x="71.3" y="4" width="2.4" height="2" fill="#333538"/><rect x="71.3" y="1" width="2.4" height="2" fill="#333538"/><rect x="74.4" y="31" width="2.4" height="2" fill="#333538"/><rect x="74.4" y="28" width="2.4" height="2" fill="#333538"/><rect x="74.4" y="25" width="2.4" height="2" fill="#333538"/><rect x="74.4" y="22" width="2.4" height="2" fill="#333538"/><rect x="74.4" y="19" width="2.4" height="2" fill="#333538"/><rect x="74.4" y="16" width="2.4" height="2" fill="#333538"/><rect x="74.4" y="13" width="2.4" height="2" fill="#333538"/><rect x="74.4" y="10" width="2.4" height="2" fill="#333538"/><rect x="74.4" y="7" width="2.4" height="2" fill="#333538"/><rect x="74.4" y="4" width="2.4" height="2" fill="#333538"/><rect x="74.4" y="1" width="2.4" height="2" fill="#333538"/><rect x="77.5" y="31" width="2.4" height="2" fill="#333538"/><rect x="77.5" y="28" width="2.4" height="2" fill="#333538"/><rect x="77.5" y="25" width="2.4" height="2" fill="#333538"/><rect x="77.5" y="22" width="2.4" height="2" fill="#333538"/><rect x="77.5" y="19" width="2.4" height="2" fill="#333538"/><rect x="77.5" y="16" width="2.4" height="2" fill="#333538"/><rect x="77.5" y="13" width="2.4" height="2" fill="#333538"/><rect x="77.5" y="10" width="2.4" height="2" fill="#333538"/><rect x="77.5" y="7" width="2.4" height="2" fill="#333538"/><rect x="77.5" y="4" width="2.4" height="2" fill="#333538"/><rect x="77.5" y="1" width="2.4" height="2" fill="#333538"/><rect x="80.6" y="31" width="2.4" height="2" fill="#333538"/><rect x="80.6" y="28" width="2.4" height="2" fill="#333538"/><rect x="80.6" y="25" width="2.4" height="2" fill="#333538"/><rect x="80.6" y="22" width="2.4" height="2" fill="#333538"/><rect x="80.6" y="19" width="2.4" height="2" fill="#333538"/><rect x="80.6" y="16" width="2.4" height="2" fill="#333538"/><rect x="80.6" y="13" width="2.4" height="2" fill="#333538"/><rect x="80.6" y="10" width="2.4" height="2" fill="#333538"/><rect x="80.6" y="7" width="2.4" height="2" fill="#333538"/><rect x="80.6" y="4" width="2.4" height="2" fill="#333538"/><rect x="80.6" y="1" width="2.4" height="2" fill="#333538"/><rect x="83.7" y="31" width="2.4" height="2" fill="#333538"/><rect x="83.7" y="28" width="2.4" height="2" fill="#333538"/><rect x="83.7" y="25" width="2.4" height="2" fill="#333538"/><rect x="83.7" y="22" width="2.4" height="2" fill="#333538"/><rect x="83.7" y="19" width="2.4" height="2" fill="#333538"/><rect x="83.7" y="16" width="2.4" height="2" fill="#333538"/><rect x="83.7" y="13" width="2.4" height="2" fill="#333538"/><rect x="83.7" y="10" width="2.4" height="2" fill="#333538"/><rect x="83.7" y="7" width="2.4" height="2" fill="#333538"/><rect x="83.7" y="4" width="2.4" height="2" fill="#333538"/><rect x="83.7" y="1" width="2.4" height="2" fill="#333538"/><rect x="86.8" y="31" width="2.4" height="2" fill="#3a78cc"/><rect x="86.8" y="28" width="2.4" height="2" fill="#333538"/><rect x="86.8" y="25" width="2.4" height="2" fill="#333538"/><rect x="86.8" y="22" width="2.4" height="2" fill="#333538"/><rect x="86.8" y="19" width="2.4" height="2" fill="#333538"/><rect x="86.8" y="16" width="2.4" height="2" fill="#333538"/><rect x="86.8" y="13" width="2.4" height="2" fill="#333538"/><rect x="86.8" y="10" width="2.4" height="2" fill="#333538"/><rect x="86.8" y="7" width="2.4" height="2" fill="#333538"/><rect x="86.8" y="4" width="2.4" height="2" fill="#333538"/><rect x="86.8" y="1" width="2.4" height="2" fill="#333538"/><rect x="89.9" y="31" width="2.4" height="2" fill="#3a78cc"/><rect x="89.9" y="28" width="2.4" height="2" fill="#333538"/><rect x="89.9" y="25" width="2.4" height="2" fill="#333538"/><rect x="89.9" y="22" width="2.4" height="2" fill="#333538"/><rect x="89.9" y="19" width="2.4" height="2" fill="#333538"/><rect x="89.9" y="16" width="2.4" height="2" fill="#333538"/><rect x="89.9" y="13" width="2.4" height="2" fill="#333538"/><rect x="89.9" y="10" width="2.4" height="2" fill="#333538"/><rect x="89.9" y="7" width="2.4" height="2" fill="#333538"/><rect x="89.9" y="4" width="2.4" height="2" fill="#333538"/><rect x="89.9" y="1" width="2.4" height="2" fill="#333538"/><rect x="93.0" y="31" width="2.4" height="2" fill="#3a78cc"/><rect x="93.0" y="28" width="2.4" height="2" fill="#333538"/><rect x="93.0" y="25" width="2.4" height="2" fill="#333538"/><rect x="93.0" y="22" width="2.4" height="2" fill="#333538"/><rect x="93.0" y="19" width="2.4" height="2" fill="#333538"/><rect x="93.0" y="16" width="2.4" height="2" fill="#333538"/><rect x="93.0" y="13" width="2.4" height="2" fill="#333538"/><rect x="93.0" y="10" width="2.4" height="2" fill="#333538"/><rect x="93.0" y="7" width="2.4" height="2" fill="#333538"/><rect x="93.0" y="4" width="2.4" height="2" fill="#333538"/><rect x="93.0" y="1" width="2.4" height="2" fill="#333538"/><rect x="96.1" y="31" width="2.4" height="2" fill="#3a78cc"/><rect x="96.1" y="28" width="2.4" height="2" fill="#333538"/><rect x="96.1" y="25" width="2.4" height="2" fill="#333538"/><rect x="96.1" y="22" width="2.4" height="2" fill="#333538"/><rect x="96.1" y="19" width="2.4" height="2" fill="#333538"/><rect x="96.1" y="16" width="2.4" height="2" fill="#333538"/><rect x="96.1" y="13" width="2.4" height="2" fill="#333538"/><rect x="96.1" y="10" width="2.4" height="2" fill="#333538"/><rect x="96.1" y="7" width="2.4" height="2" fill="#333538"/><rect x="96.1" y="4" width="2.4" height="2" fill="#333538"/><rect x="96.1" y="1" width="2.4" height="2" fill="#333538"/><rect x="99.2" y="31" width="2.4" height="2" fill="#3a78cc"/><rect x="99.2" y="28" width="2.4" height="2" fill="#333538"/><rect x="99.2" y="25" width="2.4" height="2" fill="#333538"/><rect x="99.2" y="22" width="2.4" height="2" fill="#333538"/><rect x="99.2" y="19" width="2.4" height="2" fill="#333538"/><rect x="99.2" y="16" width="2.4" height="2" fill="#333538"/><rect x="99.2" y="13" width="2.4" height="2" fill="#333538"/><rect x="99.2" y="10" width="2.4" height="2" fill="#333538"/><rect x="99.2" y="7" width="2.4" height="2" fill="#333538"/><rect x="99.2" y="4" width="2.4" height="2" fill="#333538"/><rect x="99.2" y="1" width="2.4" height="2" fill="#333538"/><rect x="102.3" y="31" width="2.4" height="2" fill="#333538"/><rect x="102.3" y="28" width="2.4" height="2" fill="#333538"/><rect x="102.3" y="25" width="2.4" height="2" fill="#333538"/><rect x="102.3" y="22" width="2.4" height="2" fill="#333538"/><rect x="102.3" y="19" width="2.4" height="2" fill="#333538"/><rect x="102.3" y="16" width="2.4" height="2" fill="#333538"/><rect x="102.3" y="13" width="2.4" height="2" fill="#333538"/><rect x="102.3" y="10" width="2.4" height="2" fill="#333538"/><rect x="102.3" y="7" width="2.4" height="2" fill="#333538"/><rect x="102.3" y="4" width="2.4" height="2" fill="#333538"/><rect x="102.3" y="1" width="2.4" height="2" fill="#333538"/><rect x="105.4" y="31" width="2.4" height="2" fill="#333538"/><rect x="105.4" y="28" width="2.4" height="2" fill="#333538"/><rect x="105.4" y="25" width="2.4" height="2" fill="#333538"/><rect x="105.4" y="22" width="2.4" height="2" fill="#333538"/><rect x="105.4" y="19" width="2.4" height="2" fill="#333538"/><rect x="105.4" y="16" width="2.4" height="2" fill="#333538"/><rect x="105.4" y="13" width="2.4" height="2" fill="#333538"/><rect x="105.4" y="10" width="2.4" height="2" fill="#333538"/><rect x="105.4" y="7" width="2.4" height="2" fill="#333538"/><rect x="105.4" y="4" width="2.4" height="2" fill="#333538"/><rect x="105.4" y="1" width="2.4" height="2" fill="#333538"/><rect x="108.5" y="31" width="2.4" height="2" fill="#333538"/><rect x="108.5" y="28" width="2.4" height="2" fill="#333538"/><rect x="108.5" y="25" width="2.4" height="2" fill="#333538"/><rect x="108.5" y="22" width="2.4" height="2" fill="#333538"/><rect x="108.5" y="19" width="2.4" height="2" fill="#333538"/><rect x="108.5" y="16" width="2.4" height="2" fill="#333538"/><rect x="108.5" y="13" width="2.4" height="2" fill="#333538"/><rect x="108.5" y="10" width="2.4" height="2" fill="#333538"/><rect x="108.5" y="7" width="2.4" height="2" fill="#333538"/><rect x="108.5" y="4" width="2.4" height="2" fill="#333538"/><rect x="108.5" y="1" width="2.4" height="2" fill="#333538"/><rect x="111.6" y="31" width="2.4" height="2" fill="#3a78cc"/><rect x="111.6" y="28" width="2.4" height="2" fill="#333538"/><rect x="111.6" y="25" width="2.4" height="2" fill="#333538"/><rect x="111.6" y="22" width="2.4" height="2" fill="#333538"/><rect x="111.6" y="19" width="2.4" height="2" fill="#333538"/><rect x="111.6" y="16" width="2.4" height="2" fill="#333538"/><rect x="111.6" y="13" width="2.4" height="2" fill="#333538"/><rect x="111.6" y="10" width="2.4" height="2" fill="#333538"/><rect x="111.6" y="7" width="2.4" height="2" fill="#333538"/><rect x="111.6" y="4" width="2.4" height="2" fill="#333538"/><rect x="111.6" y="1" width="2.4" height="2" fill="#333538"/><rect x="114.7" y="31" width="2.4" height="2" fill="#3a78cc"/><rect x="114.7" y="28" width="2.4" height="2" fill="#333538"/><rect x="114.7" y="25" width="2.4" height="2" fill="#333538"/><rect x="114.7" y="22" width="2.4" height="2" fill="#333538"/><rect x="114.7" y="19" width="2.4" height="2" fill="#333538"/><rect x="114.7" y="16" width="2.4" height="2" fill="#333538"/><rect x="114.7" y="13" width="2.4" height="2" fill="#333538"/><rect x="114.7" y="10" width="2.4" height="2" fill="#333538"/><rect x="114.7" y="7" width="2.4" height="2" fill="#333538"/><rect x="114.7" y="4" width="2.4" height="2" fill="#333538"/><rect x="114.7" y="1" width="2.4" height="2" fill="#333538"/><rect x="117.8" y="31" width="2.4" height="2" fill="#3a78cc"/><rect x="117.8" y="28" width="2.4" height="2" fill="#333538"/><rect x="117.8" y="25" width="2.4" height="2" fill="#333538"/><rect x="117.8" y="22" width="2.4" height="2" fill="#333538"/><rect x="117.8" y="19" width="2.4" height="2" fill="#333538"/><rect x="117.8" y="16" width="2.4" height="2" fill="#333538"/><rect x="117.8" y="13" width="2.4" height="2" fill="#333538"/><rect x="117.8" y="10" width="2.4" height="2" fill="#333538"/><rect x="117.8" y="7" width="2.4" height="2" fill="#333538"/><rect x="117.8" y="4" width="2.4" height="2" fill="#333538"/><rect x="117.8" y="1" width="2.4" height="2" fill="#333538"/><rect x="120.9" y="31" width="2.4" height="2" fill="#333538"/><rect x="120.9" y="28" width="2.4" height="2" fill="#333538"/><rect x="120.9" y="25" width="2.4" height="2" fill="#333538"/><rect x="120.9" y="22" width="2.4" height="2" fill="#333538"/><rect x="120.9" y="19" width="2.4" height="2" fill="#333538"/><rect x="120.9" y="16" width="2.4" height="2" fill="#333538"/><rect x="120.9" y="13" width="2.4" height="2" fill="#333538"/><rect x="120.9" y="10" width="2.4" height="2" fill="#333538"/><rect x="120.9" y="7" width="2.4" height="2" fill="#333538"/><rect x="120.9" y="4" width="2.4" height="2" fill="#333538"/><rect x="120.9" y="1" width="2.4" height="2" fill="#333538"/><rect x="71.3" y="23" width="14.8" height="1.2" fill="#3a78cc"/><rect x="86.8" y="23" width="17.9" height="1.2" fill="#3a78cc"/><rect x="40.3" y="14" width="5.5" height="1.2" fill="#3a78cc"/><rect x="46.5" y="14" width="5.5" height="1.2" fill="#3a78cc"/><rect x="55.8" y="14" width="14.8" height="1.2" fill="#3a78cc"/><rect x="105.4" y="14" width="17.9" height="1.2" fill="#3a78cc"/><rect x="43.4" y="5" width="2.4" height="1.2" fill="#3a78cc"/><rect x="3.1" y="0" width="11.7" height="1.2" fill="#3a78cc"/></svg>
<div class="a" style="left:549px;top:617px;width:12px;height:13px;background:#1e1e1e;color:#888;font:8px/13px 'Liberation Sans',sans-serif;text-align:center">A</div>
<div class="a" style="left:573px;top:617px;width:12px;height:13px;background:#1e1e1e;color:#888;font:8px/13px 'Liberation Sans',sans-serif;text-align:center">B</div>
<div class="a" style="left:594px;top:617px;width:12px;height:13px;background:#1e1e1e"></div>
<div class="a" style="left:608px;top:617px;width:12px;height:13px;background:#1e1e1e"></div>
<svg class="a" style="left:562px;top:618px" width="9" height="11" viewBox="0 0 9 11"><path d="M1 3 H7 M5 1 L7 3 L5 5 M8 8 H2 M4 6 L2 8 L4 10" stroke="#777" fill="none"/></svg>
<svg class="a" style="left:596px;top:619px" width="9" height="9" viewBox="0 0 9 9"><path d="M1 7 V1 H8 V6 H4 M5 4 L3 6 L5 8" stroke="#999" fill="none"/></svg>
<svg class="a" style="left:610px;top:619px" width="9" height="9" viewBox="0 0 9 9"><path d="M1 1 L8 8 M1 8 L8 1 M6 1 H8 V3 M6 8 H8 V6" stroke="#999" fill="none"/></svg>
<div class="a" style="left:284px;top:643px;width:341px;height:22px;background:#212121;border-top:1px solid #111"></div>
<div class="a" style="left:289px;top:653px;width:213px;height:2px;background:#e8c81a"></div>
<div class="a" style="left:502px;top:653px;width:39px;height:2px;background:#080808"></div>
<div class="a" style="left:497px;top:649px;width:9px;height:10px;border-radius:50%;background:#f4f4f4"></div>
<svg class="a" style="left:548px;top:648px" width="12" height="12" viewBox="0 0 12 12"><path d="M1 4 H3.5 L7 1 V11 L3.5 8 H1 Z" fill="#888"/><path d="M9 3.5 V8.5" stroke="#777"/></svg>
<div class="a" style="left:563px;top:653px;width:37px;height:2px;background:#e8c81a"></div>
<div class="a" style="left:600px;top:653px;width:17px;height:2px;background:#080808"></div>
<div class="a" style="left:595px;top:649px;width:9px;height:10px;border-radius:50%;background:#f4f4f4"></div>
<div class="a" style="left:284px;top:665px;width:341px;height:39px;background:#1e1e1e;border-top:1px solid #141414"></div>
<div class="a" style="left:316px;top:666px;width:1px;height:38px;background:#121212"></div>
<div class="a" style="left:348px;top:666px;width:1px;height:38px;background:#121212"></div>
<div class="a" style="left:379px;top:666px;width:1px;height:38px;background:#121212"></div>
<div class="a" style="left:411px;top:666px;width:1px;height:38px;background:#121212"></div>
<div class="a" style="left:443px;top:666px;width:1px;height:38px;background:#121212"></div>
<div class="a" style="left:593px;top:666px;width:1px;height:38px;background:#121212"></div>
<div class="a" style="left:296px;top:680px;width:2px;height:11px;background:#eee"></div><div class="a" style="left:301px;top:680px;width:2px;height:11px;background:#eee"></div>
<div class="a" style="left:328px;top:681px;width:8px;height:8px;background:#eee"></div>
<svg class="a" style="left:358px;top:680px" width="10" height="11" viewBox="0 0 10 11"><path d="M1.5 1 V10" stroke="#eee" stroke-width="2"/><path d="M9 1 L3 5.5 L9 10 Z" fill="#eee"/></svg>
<svg class="a" style="left:390px;top:680px" width="10" height="11" viewBox="0 0 10 11"><path d="M8.5 1 V10" stroke="#eee" stroke-width="2"/><path d="M1 1 L7 5.5 L1 10 Z" fill="#eee"/></svg>
<svg class="a" style="left:422px;top:679px" width="10" height="11" viewBox="0 0 10 11"><path d="M5 1 L9.5 6 H.5 Z" fill="#eee"/><rect x=".5" y="8" width="9" height="2" fill="#eee"/></svg>
<div class="t" style="left:452px;top:679.9px;font:normal 11px/14.3px 'Liberation Sans',sans-serif;color:#e8e8e8;transform:scaleX(0.72);">00:00:33</div>
<div class="t" style="left:488px;top:679.9px;font:normal 11px/14.3px 'Liberation Sans',sans-serif;color:#666;transform:scaleX(0.72);">/</div>
<div class="t" style="left:496px;top:679.9px;font:normal 11px/14.3px 'Liberation Sans',sans-serif;color:#777;transform:scaleX(0.72);">00:00:39</div>
<div class="a" style="left:546px;top:678px;width:10px;height:15px;background:#888;border-radius:1px"></div><div class="a" style="left:548px;top:681px;width:6px;height:9px;background:#5a5a5a"></div>
<svg class="a" style="left:569px;top:678px" width="14" height="15" viewBox="0 0 14 15"><g fill="#888"><circle cx="7" cy="7.5" r="4.5"/><rect x="6" y="0" width="2" height="15"/><rect x="0" y="6.5" width="14" height="2"/><rect x="6" y="0" width="2" height="15" transform="rotate(45 7 7.5)"/><rect x="6" y="0" width="2" height="15" transform="rotate(-45 7 7.5)"/></g><circle cx="7" cy="7.5" r="2" fill="#1e1e1e"/></svg>
<div class="a" style="left:604px;top:680px;width:11px;height:2px;background:#ddd"></div><div class="a" style="left:604px;top:685px;width:11px;height:2px;background:#ddd"></div><div class="a" style="left:604px;top:690px;width:11px;height:2px;background:#ddd"></div>
<div class="a" style="left:648px;top:152px;width:357px;height:539px;background:#0a0a0a"></div>
<div class="a" style="left:651px;top:155px;width:350px;height:31px;background:#1e1e1e"></div>
<div class="t" style="left:657px;top:162.8px;font:bold 11px/14.3px 'Liberation Sans',sans-serif;color:#c4c4c4;transform:scaleX(0.7);">Browser</div>
<div class="a" style="left:919px;top:168px;width:30px;height:3px;background:#f0e020"></div>
<div class="a" style="left:947px;top:166px;width:9px;height:7px;border-radius:2px;background:#f0f0f0"></div>
<svg class="a" style="left:967px;top:164px" width="10" height="10" viewBox="0 0 10 10"><path d="M1 1 V9 M1 5 H3 M3 2 H8 L7 5 L8 8 H3 Z" stroke="#777" fill="#777"/></svg>
<svg class="a" style="left:985px;top:164px" width="10" height="10" viewBox="0 0 10 10"><path d="M1 1 L9 9 M9 1 L1 9" stroke="#aaa" stroke-width="1.1"/></svg>
<div class="a" style="left:651px;top:186px;width:350px;height:30px;background:#232323"></div>
<div class="a" style="left:651px;top:187px;width:55px;height:29px;background:#333"></div>
<div class="t" style="left:657px;top:195.7px;font:normal 12px/15.6px 'Liberation Sans',sans-serif;color:#8a8a8a;transform:scaleX(0.77);-webkit-text-stroke:.15px #8a8a8a">Navigovat</div>
<div class="a" style="left:708px;top:187px;width:85px;height:30px;background:#3c3c3c"></div>
<div class="t" style="left:714px;top:195.7px;font:normal 12px/15.6px 'Liberation Sans',sans-serif;color:#e8e8e8;transform:scaleX(0.77);-webkit-text-stroke:.15px #e8e8e8">Prohlížeč nabídky</div>
<div class="a" style="left:795px;top:187px;width:119px;height:29px;background:#333"></div>
<div class="t" style="left:801px;top:195.7px;font:normal 12px/15.6px 'Liberation Sans',sans-serif;color:#8a8a8a;transform:scaleX(0.77);-webkit-text-stroke:.15px #8a8a8a">Nástroj procházení titulků</div>
<div class="a" style="left:915px;top:187px;width:86px;height:29px;background:#333"></div>
<div class="t" style="left:918px;top:195.7px;font:normal 12px/15.6px 'Liberation Sans',sans-serif;color:#8a8a8a;transform:scaleX(0.77);-webkit-text-stroke:.15px #8a8a8a">Online Subs</div>
<div class="a" style="left:969px;top:193px;width:14px;height:18px;background:#585858"></div>
<div class="a" style="left:985px;top:193px;width:14px;height:18px;background:#585858"></div>
<svg class="a" style="left:972px;top:197px" width="8" height="10" viewBox="0 0 8 10"><path d="M2 1 L6 5 L2 9" stroke="#ccc" stroke-width="1.6" fill="none"/></svg>
<svg class="a" style="left:987px;top:199px" width="10" height="7" viewBox="0 0 10 7"><path d="M1 1 L5 5 L9 1" stroke="#ccc" stroke-width="1.6" fill="none"/></svg>
<div class="a" style="left:651px;top:216px;width:350px;height:472px;background:#3c3c3c"></div>
<svg class="a" style="left:656px;top:227px" width="9" height="9" viewBox="0 0 9 9"><path d="M0 0 H3.5 L4.5 1.5 H9 V9 H0 Z" fill="#f0c838"/></svg>
<div class="t" style="left:672px;top:226.5px;font:normal 10px/13.0px 'Liberation Sans',sans-serif;color:#ccc;transform:scaleX(0.8);">..</div>
<div class="a" style="left:651px;top:242px;width:350px;height:20px;background:#333"></div>
<div class="a" style="left:658px;top:249.5px;width:5px;height:5px;border-radius:50%;background:#3a7af0"></div>
<div class="t" style="left:672px;top:245.0px;font:normal 12.3px/16.0px 'Liberation Sans',sans-serif;color:#e4e4e4;transform:scaleX(0.727);-webkit-text-stroke:.2px #e4e4e4">Audio #1 - MPEG Audio, 48.0 kHz, 2 Ch, 160 kbit/s (PID:0x0301, PESID:0xc0)</div>
<svg class="a" style="left:835px;top:255px" width="9" height="14" viewBox="0 0 9 14"><path d="M.5 .5 V11 L3 8.5 L5 13 L6.5 12.3 L4.6 8 H8 Z" fill="#fff" stroke="#000" stroke-width="1"/></svg>

<!-- right side group box -->
<div class="a" style="left:1052px;top:92px;width:142px;height:639px;border:1px solid #d8d8d8;border-radius:2px"></div>
<div class="t" style="left:1056px;top:84px;background:#f0f0f0;color:#2a2a9a;padding:0 2px;transform:scaleX(.76);-webkit-text-stroke:.3px #2a2a9a">Transponder (AU) [BS]</div>
<svg class="a" style="left:1165px;top:56px" width="22" height="11" viewBox="0 0 22 11"><path d="M1 10 L8 2 L10 9 Z" fill="#8a8a8a"/><path d="M11 4 H20 M12 7 H19" stroke="#aaa" stroke-width="1"/></svg>

<div class="lb" style="top:112.0px">Frequency:</div>
<div class="vv" style="top:112.0px">12621,955 MHz</div>
<div class="lb" style="top:145.4px">Polarization:</div>
<div class="vv" style="top:145.4px">Horizontal</div>
<div class="lb" style="top:178.9px">Symbol Rate:</div>
<div class="vv" style="top:178.9px">255,957 KS/s</div>
<div class="lb" style="top:212.3px">Standard:</div>
<div class="vv" style="top:212.3px">DVB-S</div>
<div class="lb" style="top:245.8px">Modulation:</div>
<div class="vv" style="top:245.8px">QPSK</div>
<div class="lb" style="top:279.2px">FEC:</div>
<div class="vv" style="top:279.2px">1/2</div>
<div class="lb" style="top:312.6px">RollOff:</div>
<div class="vv" style="top:312.6px">0.35</div>
<div class="lb" style="top:346.1px">Pilot:</div>
<div class="vv vg" style="top:346.1px">OFF</div>
<div class="lb" style="top:379.5px">Spectrum:</div>
<div class="vv" style="top:379.5px">Inverted</div>
<div class="lb" style="top:413.0px">Frame Type:</div>
<div class="vv vg" style="top:413.0px">Long Frame</div>
<div class="lb" style="top:446.4px">Code Mode:</div>
<div class="vv vg" style="top:446.4px">CCM</div>
<div class="lb" style="top:479.8px">Stream type:</div>
<div class="vv vg" style="top:479.8px">Transport</div>
<div class="lb" style="top:513.3px">ISSYI</div>
<div class="vv vg" style="top:513.3px">OFF</div>
<div class="lb" style="top:546.7px">NPD:</div>
<div class="vv vg" style="top:546.7px">OFF</div>
<div class="lb" style="top:580.2px">RF Level:</div>
<div class="vv" style="top:580.2px">-34 dBm</div>
<div class="lb" style="top:613.6px">BitRate:</div>
<div class="vv" style="top:613.6px">0,214 Mbit/s</div>
<div class="lb" style="top:647.0px">CarrierWidth:</div>
<div class="vv" style="top:647.0px">0,344 MHz</div>
<div class="lb" style="top:692px">MIS (0):</div>
<div class="a" style="left:1121px;top:690px;width:57px;height:18px;background:#f8f8f8;border:1px solid #eee"></div>
<div class="vv vg" style="left:1124px;top:692px;color:#888">Single</div>
<svg class="a" style="left:1164px;top:696px" width="9" height="6" viewBox="0 0 9 6"><path d="M1 1 L4.5 4.5 L8 1" stroke="#aaa" fill="none"/></svg>

<!-- button -->
<div class="a" style="left:1052px;top:740px;width:141px;height:26px;border:1.5px solid #4a8ad0;border-radius:4px;background:#fdfdfd"></div>
<div class="a" style="left:1116px;top:745px;width:13px;height:15px;border:1px solid #a8a8a8;background:linear-gradient(#e8e8e8 0,#e8e8e8 25%,#3a80d0 25%,#3a80d0 45%,#f0f0f0 45%,#f0f0f0 65%,#b8b8b8 65%,#b8b8b8 72%,#e0e0e0 72%)"></div>

<!-- table bars -->
<div class="tb" style="left:13px;width:200px;background:#90ee90"><span>PAT (1)</span></div>
<div class="tb" style="left:218px;width:200px;background:#90ee90"><span>PMT (1)</span></div>
<div class="tb" style="left:424px;width:200px;background:#ffa07a"><span>SDT (0) timeout!</span></div>
<div class="tb" style="left:629px;width:200px;background:#ffa07a"><span>CAT (0) timeout!</span></div>
<div class="tb" style="left:835px;width:202px;background:#f08080"><span>NIT (0)</span></div>

<!-- progress bars -->
<div class="pb" style="left:9px;top:775px;width:99px"><div class="seg g" style="left:0;width:100%"></div><div class="pt">Present</div></div>
<div class="pb" style="left:9px;top:799px;width:99px"><div class="seg g" style="left:0;width:100%"></div><div class="pt">Lock</div></div>

<div class="pb" style="left:111px;top:775px;width:487px"><div class="seg r" style="left:-1px;width:48px"></div><div class="seg y" style="left:47px;width:196px"></div><div class="seg g" style="left:243px;width:240px"></div><div class="pt" style="color:#302020">Level: 99%</div></div>
<div class="pb" style="left:111px;top:799px;width:487px"><div class="seg r" style="left:-1px;width:48px"></div><div class="seg y" style="left:47px;width:196px"></div><div class="seg g" style="left:243px;width:242px"></div><div class="pt" style="color:#302020">Quality: 100%</div></div>
<div class="pb" style="left:602px;top:775px;width:243px"><div class="seg r" style="left:0px;width:52px"></div><div class="seg y" style="left:52px;width:86px"></div><div class="seg g" style="left:138px;width:103px"></div><div class="pt" style="color:#302020">preBER: &lt;1.0E-7</div></div>
<div class="pb" style="left:602px;top:799px;width:489px"><div class="seg r" style="left:0px;width:64px"></div><div class="seg y" style="left:64px;width:122px"></div><div class="seg g" style="left:186px;width:301px"></div><div class="pt" style="color:#302020">SNR: 20,1 dB (Margin: 17,4 dB | Perfect)</div></div>
<div class="pb" style="left:847px;top:775px;width:244px"><div class="seg r" style="left:0px;width:52px"></div><div class="seg y" style="left:52px;width:87px"></div><div class="seg g" style="left:139px;width:103px"></div><div class="pt" style="color:#302020">BER: &lt;1.0E-7</div></div>
<div class="pb" style="left:1093px;top:775px;width:99px"><div class="seg g" style="left:-1px;width:99px"></div><div class="pt" style="color:#202020">Input (~282 Kbps)</div></div>
<div class="pb" style="left:1093px;top:799px;width:99px"><div class="seg g" style="left:-1px;width:99px"></div><div class="pt" style="color:#202020">Sync TS</div></div>
<!-- status bar -->
<div class="a" style="left:0;top:825px;width:1200px;height:1px;background:#dcdcdc"></div>
<div class="a" style="left:394px;top:828px;width:1px;height:18px;background:#b0b0b0"></div>
<div class="a" style="left:793px;top:828px;width:1px;height:18px;background:#b0b0b0"></div>
<div class="sb" style="left:0;width:394px"><span>Locked -&gt; Uptime: 01:20:19</span></div>
<div class="sb" style="left:394px;width:399px"><span>SYNC 0 | TEI 0 | CC 0</span></div>
<div class="sb" style="left:793px;width:396px"><span>Best signal: 20,1 dB (2024-05-21 15:49)</span></div>
<div class="a" style="left:1188px;top:828px;width:1px;height:19px;background:#c0c0c0"></div>
<div class="a" style="left:0;top:848px;width:1200px;height:2px;background:#3a3030"></div>


</body></html>
